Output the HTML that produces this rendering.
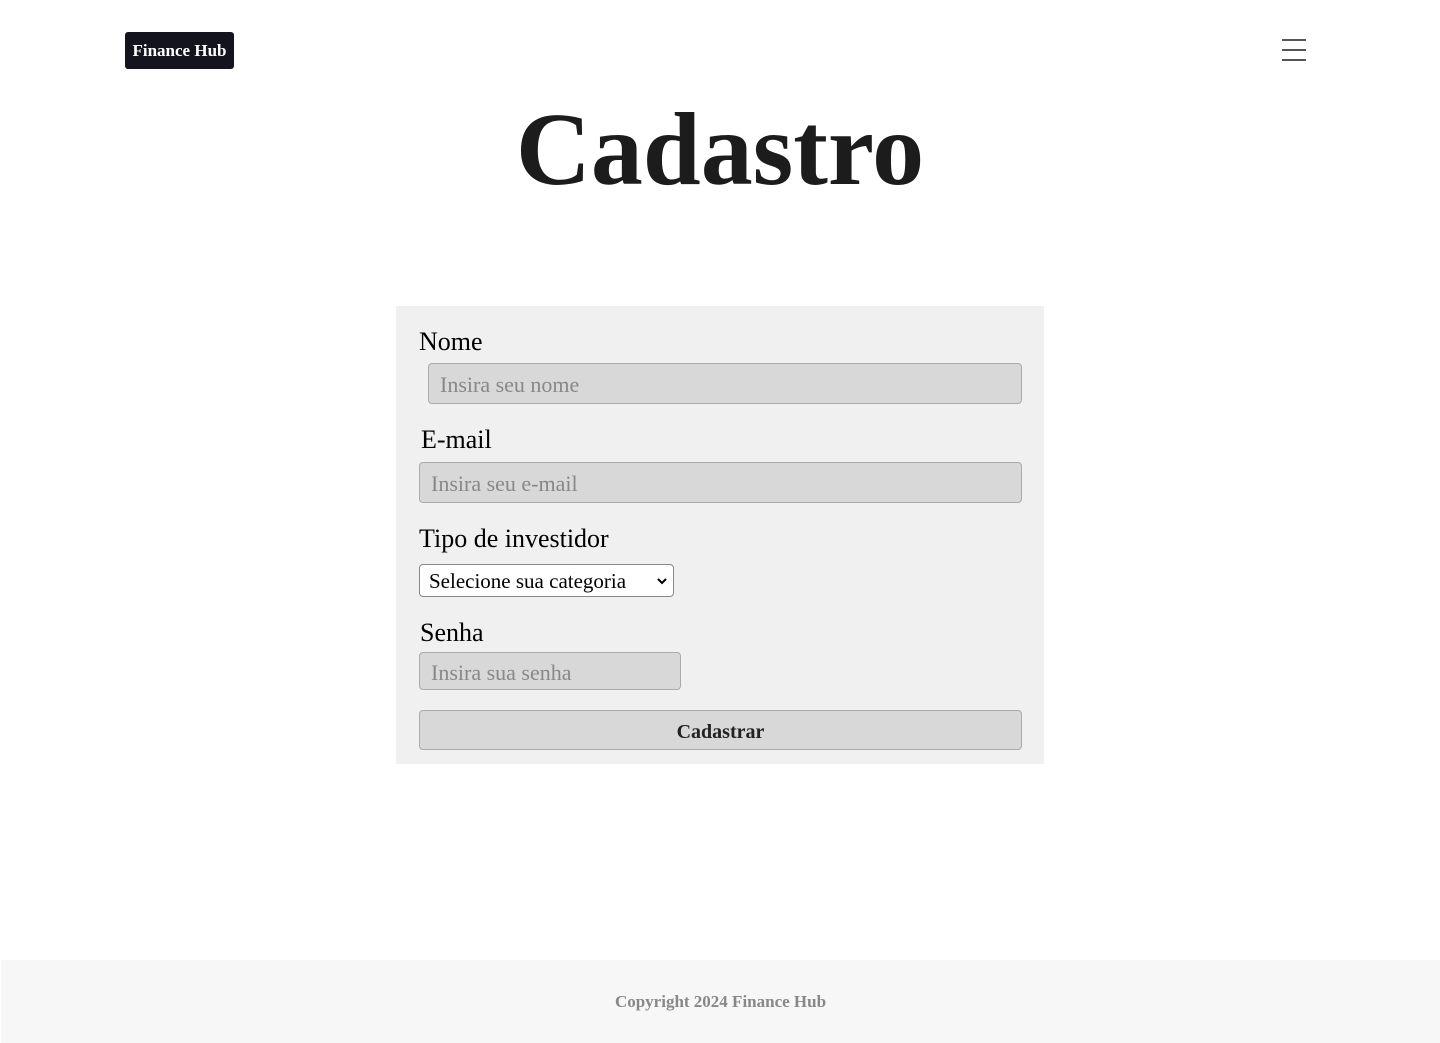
<!DOCTYPE html>
<html><head><meta charset="utf-8"><style>
*{box-sizing:border-box;margin:0;padding:0}
body{width:1440px;height:1043px;position:relative;background:#fff;font-family:"Liberation Serif",serif;color:#111;overflow:hidden}
.abs{position:absolute}
.logo{left:125px;top:32px;width:109px;height:37px;background:#14141f;color:#fff;border-radius:3px;font-weight:bold;font-size:17px;line-height:37px;text-align:center}
.burger{left:1282px;top:39px;width:24px}
.burger div{height:2px;background:#555;margin-bottom:8px}
h1{position:absolute;left:0;width:1440px;top:90px;text-align:center;font-size:104px;font-weight:bold;color:#1c1c1c;letter-spacing:0}
.card{left:396px;top:306px;width:648px;height:458px;background:#f0f0f0}
.lbl{font-size:26px;color:#000}
.inp{background:#d8d8d8;border:1px solid #aaa;border-radius:4px;font-size:22px;color:#888;padding-left:11px}
.sel{background:#fff;border:1px solid #888;border-radius:4px;font-size:21px;color:#000;padding-left:9px;line-height:32px}
.btn{background:#d8d8d8;border:1px solid #aaa;border-radius:4px;font-size:20px;font-weight:bold;text-align:center;color:#222}
footer{position:absolute;left:1px;top:960px;width:1439px;height:83px;background:#f7f7f7;text-align:center;line-height:83px;color:#888;font-weight:bold;font-size:17px}
</style></head><body>
<div class="abs logo">Finance Hub</div>
<div class="abs burger"><div></div><div></div><div></div></div>
<h1>Cadastro</h1>
<div class="abs card"></div>
<div class="abs lbl" style="left:419px;top:327px">Nome</div>
<div class="abs inp" style="left:428px;top:363px;width:594px;height:41px;line-height:41px">Insira seu nome</div>
<div class="abs lbl" style="left:421px;top:425px">E-mail</div>
<div class="abs inp" style="left:419px;top:462px;width:603px;height:41px;line-height:41px">Insira seu e-mail</div>
<div class="abs lbl" style="left:419px;top:524px">Tipo de investidor</div>
<div class="abs sel" style="left:419px;top:564px;width:255px;height:33px">Selecione sua categoria<svg style="position:absolute;right:6px;top:12px" width="10" height="8" viewBox="0 0 10 8"><path d="M1 2l4 4 4-4" stroke="#000" stroke-width="2" fill="none"/></svg></div>
<div class="abs lbl" style="left:420px;top:618px">Senha</div>
<div class="abs inp" style="left:419px;top:652px;width:262px;height:38px;line-height:40px">Insira sua senha</div>
<div class="abs btn" style="left:419px;top:710px;width:603px;height:40px;line-height:42px">Cadastrar</div>
<footer>Copyright 2024 Finance Hub</footer>
</body></html>
